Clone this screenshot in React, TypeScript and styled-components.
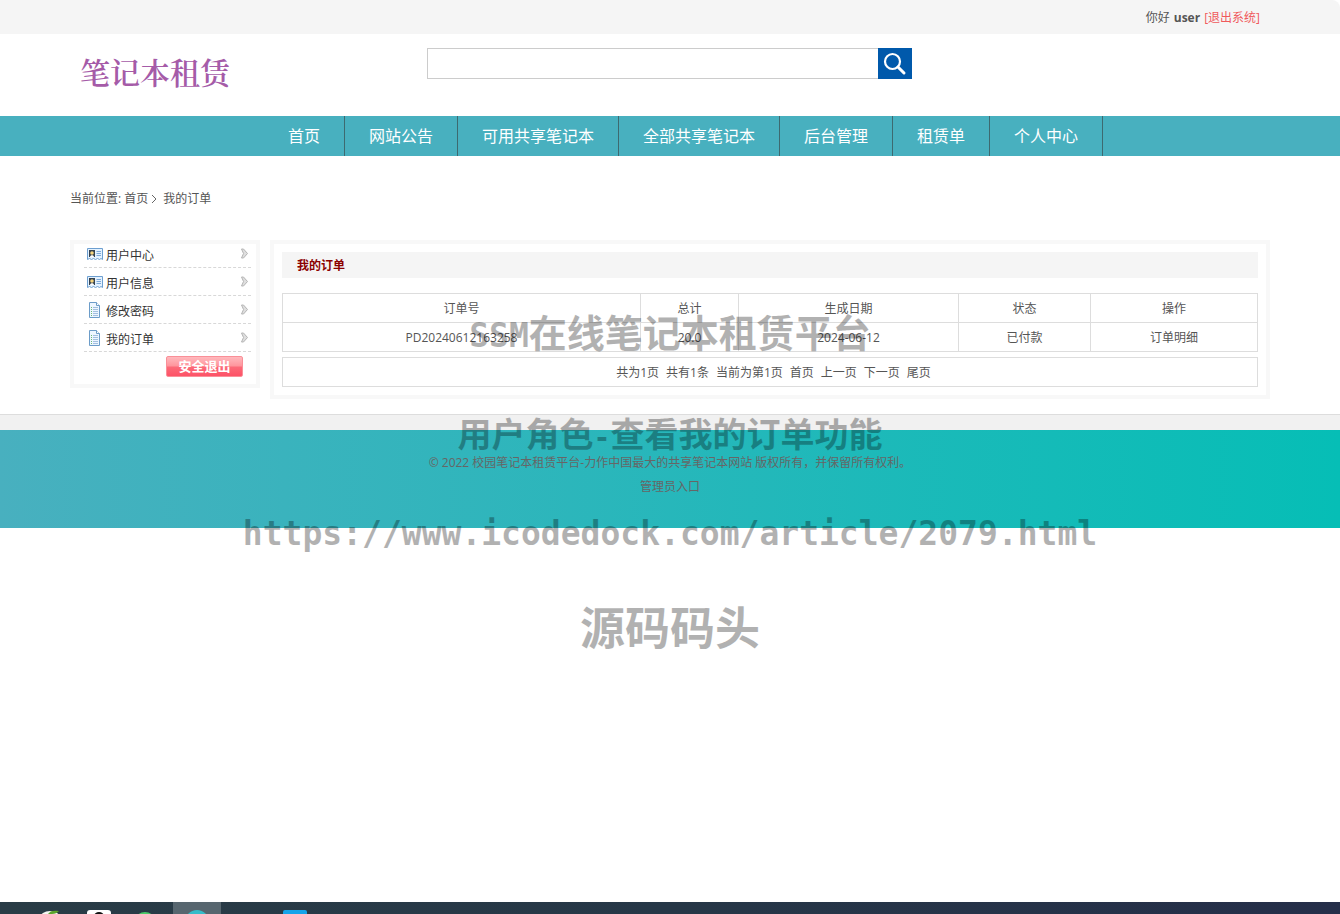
import React from "react";
import styled, { createGlobalStyle } from "styled-components";

const sans = `"Open Sans", "Noto Sans CJK SC", sans-serif`;

const GlobalStyle = createGlobalStyle`
  * { box-sizing: border-box; }
  body { margin: 0; background: #fff; color: #555; font: 12px/24px ${sans}; }
  a { color: inherit; text-decoration: none; }
  ul { margin: 0; padding: 0; list-style: none; }
`;

const Page = styled.div`
  position: relative;
  display: flex;
  flex-direction: column;
  min-height: 100vh;
  overflow: hidden;
`;

const Container = styled.div`
  width: 100%;
  max-width: 1200px;
  margin: 0 auto;
`;

const TopBar = styled.div`
  background: #f5f5f5;
  border-radius: 0 8px 0 0;
`;

const Greeting = styled(Container)`
  display: flex;
  justify-content: flex-end;
  gap: 4px;
  padding: 2px 10px 0;
  line-height: 32px;
`;

const LogoutLink = styled.a`
  color: #f0595c;
`;

const Header = styled(Container)`
  display: grid;
  grid-template-columns: 1fr 485px 1fr;
  align-items: start;
  height: 82px;
  padding: 14px 11px 0 10px;
`;

const Logo = styled.a`
  color: #a55ba8;
  font: 600 30px/46px "Noto Serif CJK SC", "Noto Sans CJK SC", serif;
`;

const SearchForm = styled.form`
  display: flex;
  height: 31px;
`;

const SearchInput = styled.input`
  flex: 1;
  min-width: 0;
  padding: 0 8px;
  border: 1px solid #ccc;
  border-right: 0;
  outline: none;
  font: 14px ${sans};
`;

const SearchButton = styled.button`
  width: 34px;
  padding: 0;
  border: 0;
  background: #0059ab;
  svg { display: block; margin: 0 auto; }
`;

const Nav = styled.nav`
  background: #48b0bf;
`;

const NavList = styled.ul`
  display: flex;
  width: 100%;
  max-width: 812px;
  margin: 0 auto;
`;

const NavLink = styled.a`
  display: block;
  padding: 0 24px;
  border-right: 1px solid #3d6a70;
  color: #fff;
  font-size: 16px;
  line-height: 40px;
  white-space: nowrap;
`;

const Breadcrumb = styled(Container)`
  display: flex;
  align-items: center;
  gap: 3px;
  padding: 31px 0 29px;
  svg { display: block; margin-right: 3px; }
`;

const Columns = styled(Container)`
  display: grid;
  grid-template-columns: 190px 1fr;
  align-items: start;
  gap: 10px;
  margin-bottom: 15px;
`;

const Side = styled.aside`
  padding: 0 5px 7px 10px;
  border: 4px solid #f8f8f8;
`;

const SideList = styled.ul`
  margin-top: -4px;
`;

const SideLink = styled.a`
  display: flex;
  align-items: center;
  gap: 3px;
  height: 28px;
  padding: 0 2px;
  border-bottom: 1px dashed #d8d8d8;
  color: #333;
  svg { flex: none; }
  svg:last-child { margin-left: auto; }
`;

const SideText = styled.span`
  padding-top: 5px;
  line-height: 20px;
`;

const ExitButton = styled.button`
  display: block;
  width: 77px;
  height: 21px;
  margin: 0 8px 0 auto;
  padding: 0;
  border: 1px solid #fa8f98;
  border-radius: 2px;
  background: linear-gradient(#ffb9bd, #ff949c 48%, #fc6a78 52%, #fd5267);
  color: #fff;
  font: bold 13px/19px ${sans};
`;

const ExitRow = styled.div`
  padding-top: 4px;
`;

const Main = styled.main`
  padding: 8px;
  border: 4px solid #f8f8f8;
`;

const Title = styled.h1`
  margin: 0 0 15px;
  padding: 2px 15px 0;
  background: #f5f5f5;
  color: #8b0000;
  font-size: 12px;
  line-height: 24px;
`;

const Orders = styled.table`
  width: 100%;
  border-collapse: collapse;
  table-layout: fixed;
  th, td {
    height: 29px;
    padding: 2px 0 0;
    border: 1px solid #ddd;
    font-weight: normal;
    text-align: center;
  }
`;

const Pager = styled.div`
  display: flex;
  justify-content: center;
  gap: 7px;
  margin-top: 5px;
  padding: 2px 0 0 7px;
  border: 1px solid #ddd;
  line-height: 26px;
`;

const Footer = styled.footer`
  padding: 36px 0 29px;
  border-top: 1px solid #ddd;
  background: linear-gradient(#f1f1f1 15px, transparent 15px), linear-gradient(90deg, #48b0bf, #06beb6);
  color: #666;
  text-align: center;
`;

const FooterLine = styled.p`
  margin: 0;
`;

const Watermark = styled.div`
  position: absolute;
  inset: 0;
  color: #000;
  opacity: 0.3;
  font-family: "Noto Sans CJK SC", sans-serif;
  font-weight: bold;
  text-align: center;
  pointer-events: none;
`;

const Mark = styled.div<{ $top: number; $size: number; $mono?: boolean }>`
  position: absolute;
  top: ${(p) => p.$top}px;
  left: 0;
  right: 0;
  font-size: ${(p) => p.$size}px;
  line-height: 50px;
  white-space: nowrap;
  ${(p) => p.$mono && `font-family: "DejaVu Sans Mono", monospace;`}
`;

const HalfWidth = styled.span<{ $size: number }>`
  font-family: "DejaVu Sans Mono", monospace;
  font-size: ${(p) => p.$size}px;
  line-height: 1;
`;

const TaskBar = styled.div`
  display: flex;
  height: 12px;
  margin-top: auto;
  background: linear-gradient(90deg, #293c46, #263747 50%, #252e49);
  svg { display: block; }
`;

const navItems = ["首页", "网站公告", "可用共享笔记本", "全部共享笔记本", "后台管理", "租赁单", "个人中心"];
const sideItems = [
  { text: "用户中心", card: true },
  { text: "用户信息", card: true },
  { text: "修改密码", card: false },
  { text: "我的订单", card: false },
];
const columns = [
  { name: "订单号", width: 358 },
  { name: "总计", width: 98 },
  { name: "生成日期", width: 220 },
  { name: "状态", width: 132 },
  { name: "操作", width: 167 },
];
const totalWidth = columns.reduce((sum, c) => sum + c.width, 0);

const CardIcon = () => (
  <svg width="17" height="14" viewBox="0 0 17 14">
    <path d="M1.500 1.500h15v11l-1.500-1-1.500 1-2-1-2 1-2-1-2 1-2-1-2 1z" fill="#e4f2ff" stroke="#6d9fd0" />
    <rect x="3" y="3" width="6" height="7" fill="#35424f" />
    <circle cx="6" cy="6" r="1.800" fill="#f6d47c" />
    <path d="M4 10c0-2.500 4-2.500 4 0z" fill="#fff" />
    <path d="M10.500 4.500H15M10.500 6.500H15M10.500 8.500H15" stroke="#7da9d8" />
  </svg>
);

const DocIcon = () => (
  <svg width="17" height="18" viewBox="0 0 17 18">
    <path d="M3.500 1.500h7l3 3v12h-10z" fill="#edf6ff" stroke="#6c9cc9" />
    <path d="M10.500 1.500v3h3" fill="#fff" stroke="#6c9cc9" />
    <path d="M7 6.500h5M7 8.500h5M7 10.500h5M7 12.500h5M7 14.500h5" stroke="#a3bfe0" />
    <path d="M5 6.500h1M5 8.500h1M5 10.500h1M5 12.500h1M5 14.500h1" stroke="#6dba73" />
  </svg>
);

const Chevron = () => (
  <svg width="9" height="11" viewBox="0 0 9 11">
    <path d="M1.500 1h2l4 4.500-4 4.500h-2l2-4.500z" fill="#dedede" stroke="#b5b5b5" />
  </svg>
);

export default function App() {
  return (
    <Page>
      <GlobalStyle />
      <TopBar>
        <Greeting>
          <span>你好</span>
          <strong>user</strong>
          <LogoutLink href="#">[退出系统]</LogoutLink>
        </Greeting>
      </TopBar>
      <Header as="header">
        <Logo href="#">笔记本租赁</Logo>
        <SearchForm>
          <SearchInput type="text" aria-label="搜索" />
          <SearchButton type="button" aria-label="搜索">
            <svg width="24" height="24" viewBox="0 0 24 24" fill="none" stroke="#fff">
              <circle cx="9.500" cy="9.500" r="7.500" strokeWidth="2.200" />
              <path d="M15 15l6 6" strokeWidth="3" strokeLinecap="round" />
            </svg>
          </SearchButton>
        </SearchForm>
      </Header>
      <Nav>
        <NavList>
          {navItems.map((t) => (
            <li key={t}>
              <NavLink href="#">{t}</NavLink>
            </li>
          ))}
        </NavList>
      </Nav>
      <Breadcrumb>
        <span>当前位置:</span>
        <a href="#">首页</a>
        <svg width="6" height="10" viewBox="0 0 6 10" fill="none" stroke="#666">
          <path d="M1 1l4 4-4 4" />
        </svg>
        <span>我的订单</span>
      </Breadcrumb>
      <Columns>
        <Side>
          <SideList>
            {sideItems.map((s) => (
              <li key={s.text}>
                <SideLink href="#">
                  {s.card ? <CardIcon /> : <DocIcon />}
                  <SideText>{s.text}</SideText>
                  <Chevron />
                </SideLink>
              </li>
            ))}
          </SideList>
          <ExitRow>
            <ExitButton type="button">安全退出</ExitButton>
          </ExitRow>
        </Side>
        <Main>
          <Title>我的订单</Title>
          <Orders>
            <colgroup>
              {columns.map((c) => (
                <col key={c.name} style={{ width: `${(c.width / totalWidth) * 100}%` }} />
              ))}
            </colgroup>
            <thead>
              <tr>
                {columns.map((c) => (
                  <th key={c.name} scope="col">{c.name}</th>
                ))}
              </tr>
            </thead>
            <tbody>
              <tr>
                <td>PD20240612163258</td>
                <td>20.0</td>
                <td>2024-06-12</td>
                <td>已付款</td>
                <td>
                  <a href="#">订单明细</a>
                </td>
              </tr>
            </tbody>
          </Orders>
          <Pager>
            <span>共为1页</span>
            <span>共有1条</span>
            <span>当前为第1页</span>
            <a href="#">首页</a>
            <a href="#">上一页</a>
            <a href="#">下一页</a>
            <a href="#">尾页</a>
          </Pager>
        </Main>
      </Columns>
      <Footer>
        <FooterLine>© 2022 校园笔记本租赁平台-力作中国最大的共享笔记本网站 版权所有，并保留所有权利。</FooterLine>
        <FooterLine>
          <a href="#">管理员入口</a>
        </FooterLine>
      </Footer>
      <TaskBar>
        <svg width="340" height="12" viewBox="0 0 340 12">
          <rect x="173" width="48" height="12" fill="#57666f" />
          <ellipse cx="50" cy="16" rx="10" ry="7" fill="#f4f7f2" />
          <path d="M48 12c2-3 5-4 11-3-2 2-4 3-7 3z" fill="#5ba42c" />
          <rect x="87" y="8" width="24" height="14" rx="3" fill="#fff" />
          <ellipse cx="99" cy="14" rx="5" ry="4" fill="#111" />
          <ellipse cx="145" cy="17" rx="9" ry="7" fill="#4ccb6b" />
          <circle cx="197" cy="20" r="12" fill="#35bcc9" />
          <rect x="283" y="8" width="24" height="14" rx="2" fill="#14a4ea" />
        </svg>
      </TaskBar>
      <Watermark>
        <Mark $top={306} $size={38}>
          <HalfWidth $size={33}>SSM</HalfWidth>在线笔记本租赁平台
        </Mark>
        <Mark $top={408} $size={34}>
          用户角色<HalfWidth $size={28}>-</HalfWidth>查看我的订单功能
        </Mark>
        <Mark $top={509} $size={33} $mono>https://www.icodedock.com/article/2079.html</Mark>
        <Mark $top={601} $size={45}>源码码头</Mark>
      </Watermark>
    </Page>
  );
}
